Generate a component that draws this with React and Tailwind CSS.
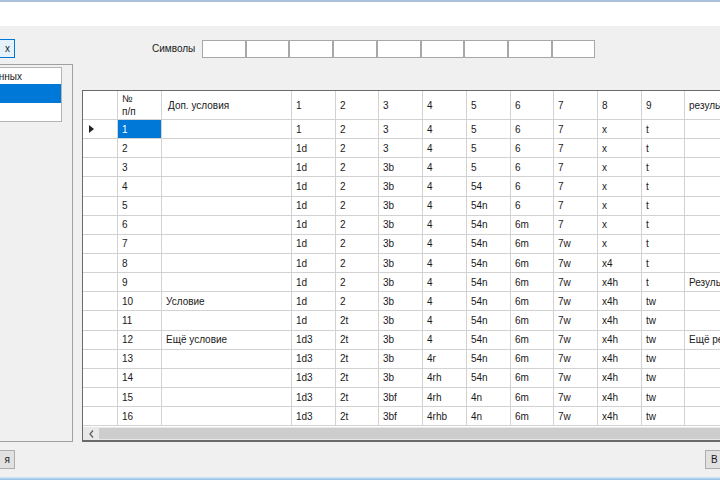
const COLS = [44, 43, 44, 44, 44, 43, 44, 44, 43];

const ROWS = [
  ['1', '', '1', '2', '3', '4', '5', '6', '7', 'x', 't', ''],
  ['2', '', '1d', '2', '3', '4', '5', '6', '7', 'x', 't', ''],
  ['3', '', '1d', '2', '3b', '4', '5', '6', '7', 'x', 't', ''],
  ['4', '', '1d', '2', '3b', '4', '54', '6', '7', 'x', 't', ''],
  ['5', '', '1d', '2', '3b', '4', '54n', '6', '7', 'x', 't', ''],
  ['6', '', '1d', '2', '3b', '4', '54n', '6m', '7', 'x', 't', ''],
  ['7', '', '1d', '2', '3b', '4', '54n', '6m', '7w', 'x', 't', ''],
  ['8', '', '1d', '2', '3b', '4', '54n', '6m', '7w', 'x4', 't', ''],
  ['9', '', '1d', '2', '3b', '4', '54n', '6m', '7w', 'x4h', 't', 'Результат'],
  ['10', 'Условие', '1d', '2', '3b', '4', '54n', '6m', '7w', 'x4h', 'tw', ''],
  ['11', '', '1d', '2t', '3b', '4', '54n', '6m', '7w', 'x4h', 'tw', ''],
  ['12', 'Ещё условие', '1d3', '2t', '3b', '4', '54n', '6m', '7w', 'x4h', 'tw', 'Ещё результат'],
  ['13', '', '1d3', '2t', '3b', '4r', '54n', '6m', '7w', 'x4h', 'tw', ''],
  ['14', '', '1d3', '2t', '3b', '4rh', '54n', '6m', '7w', 'x4h', 'tw', ''],
  ['15', '', '1d3', '2t', '3bf', '4rh', '4n', '6m', '7w', 'x4h', 'tw', ''],
  ['16', '', '1d3', '2t', '3bf', '4rhb', '4n', '6m', '7w', 'x4h', 'tw', ''],
];

function Cell({ w, children, className = '' }) {
  return (
    <div
      className={`shrink-0 overflow-hidden whitespace-nowrap border-r border-b border-[#d2d2d2] pl-[4px] flex items-center ${className}`}
      style={{ width: w }}
    >
      {children}
    </div>
  );
}

function Grid() {
  return (
    <div className="mt-[26px] ml-[9px] h-[352px] w-[700px] shrink-0 flex flex-col border-t border-l border-[#6a6a6a] bg-white">
      {/* header */}
      <div className="flex h-[29px] shrink-0">
        <Cell w={35} />
        <Cell w={44} className="leading-[13px]">
          <div className="flex flex-col">
            <span>№</span>
            <span>п/п</span>
          </div>
        </Cell>
        <Cell w={130} className="pl-[6px]">Доп. условия</Cell>
        {COLS.map((w, i) => (
          <Cell key={i} w={w}>{i + 1}</Cell>
        ))}
        <Cell w={120}>результат</Cell>
      </div>

      {ROWS.map((r, ri) => (
        <div key={ri} className="flex h-[19.15px] shrink-0">
          <Cell w={35} className="pl-[6px]">
            {ri === 0 && (
              <svg width="5" height="8" viewBox="0 0 5 8">
                <path d="M0 0 L5 4 L0 8 Z" fill="#222" />
              </svg>
            )}
          </Cell>
          <Cell w={44} className={ri === 0 ? 'bg-[#0078d7] text-white' : ''}>{r[0]}</Cell>
          <Cell w={130}>{r[1]}</Cell>
          {COLS.map((w, i) => (
            <Cell key={i} w={w}>{r[i + 2]}</Cell>
          ))}
          <Cell w={120}>{r[11]}</Cell>
        </div>
      ))}

      <div className="flex-1" />

      {/* horizontal scrollbar */}
      <div className="flex h-[15px] shrink-0 border-b-2 border-[#6a6a6a] bg-[#e8e8e8]">
        <div className="w-[16px] flex items-center justify-center">
          <svg width="5" height="8" viewBox="0 0 5 8">
            <path d="M4 0.5 L1 4 L4 7.5" stroke="#606060" strokeWidth="1.3" fill="none" />
          </svg>
        </div>
        <div className="flex-1 my-[1px] bg-[#cdcdcd]" />
      </div>
    </div>
  );
}

export default function App() {
  return (
    <div
      className="w-[720px] h-[480px] overflow-hidden flex flex-col bg-[#f0f0f0] text-[10px] text-[#1a1a1a]"
      style={{ fontFamily: '"Liberation Sans", Arial, sans-serif' }}
    >
      {/* title strip */}
      <div className="h-[26px] shrink-0 border-t-2 border-[#a9c2da] bg-white" />

      {/* body */}
      <div className="flex-1 flex flex-col pt-[13px]">
        {/* top row */}
        <div className="flex items-center h-[19px]">
          <button className="-ml-[60px] w-[75px] h-[19px] shrink-0 border border-[#0078d7] bg-[#e5f1fb] text-right pr-[4px]">
            х
          </button>
          <span className="ml-[137px] text-[#222]">Символы</span>
          <div className="ml-[7px] flex">
            {COLS.map((w, i) => (
              <div key={i} className="h-[18px] border border-[#a8a8a8] bg-white" style={{ width: w }} />
            ))}
          </div>
        </div>

        {/* main row */}
        <div className="flex items-start mt-[6px]">
          <div className="-ml-[10px] w-[83px] h-[378px] shrink-0 border border-[#a0a0a0] pt-[2px] pl-[1px]">
            <div className="w-[70px] h-[55px] border border-[#b4b4b4] bg-white flex flex-col">
              <div className="h-[16px] flex items-center justify-end pr-[39px] whitespace-nowrap">
                данных
              </div>
              <div className="h-[19px] bg-[#0078d7]" />
            </div>
          </div>
          <Grid />
        </div>

        {/* bottom row */}
        <div className="flex justify-between mt-[8px]">
          <button className="-ml-[60px] w-[75px] h-[19px] border border-[#adadad] bg-[#e1e1e1] text-right pr-[4px]">
            я
          </button>
          <button className="-mr-[60px] w-[75px] h-[19px] border border-[#adadad] bg-[#e1e1e1] text-left pl-[5px]">
            В
          </button>
        </div>
      </div>

      {/* bottom border */}
      <div className="h-[3px] shrink-0 bg-gradient-to-b from-[#d6ebfa] to-[#8fbde3]" />
    </div>
  );
}
